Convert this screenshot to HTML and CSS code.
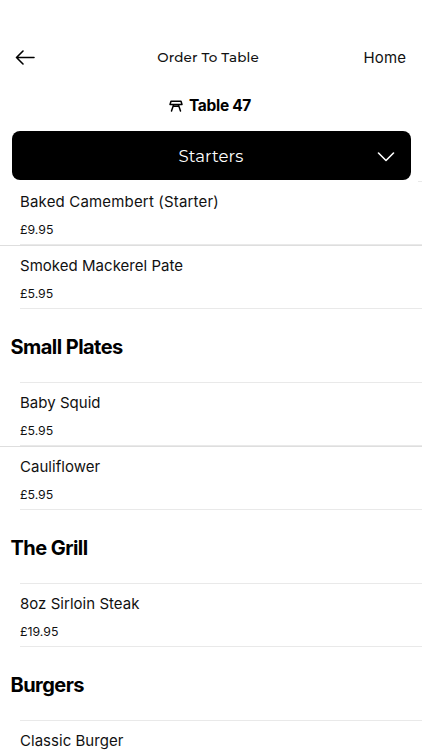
FILE: index.html
```
<!DOCTYPE html>
<html lang="en">
<head>
<meta charset="utf-8">
<title>Order To Table</title>
<link rel="stylesheet" href="styles.css">
</head>
<body>
<header class="nav">
<svg class="back" viewBox="0 0 20 16"><path d="M19 7.5H1.5M8 1L1.5 7.5L8 14"/></svg>
<h1 class="title">Order To Table</h1>
<a class="home">Home</a>
</header>
<div class="table-no">
<svg class="table-icon" viewBox="0 0 14 12"><path d="M2 1.2H12L13 4.5H1ZM4.6 4.7L2.5 11M9.4 4.7L11.5 11M4.5 6.3H9.5"/></svg>
<span class="table-label">Table 47</span>
</div>
<div class="picker"><span class="picker-label">Starters</span><svg class="chevron" viewBox="0 0 18 10"><path d="M1.5 1L9 8.5L16.5 1"/></svg></div>
<main>
<ul class="items first">
<li class="item"><span class="name wide">Baked Camembert (Starter)</span><span class="price">£9.95</span></li>
<li class="item"><span class="name">Smoked Mackerel Pate</span><span class="price">£5.95</span></li>
</ul>
<h2 class="section">Small Plates</h2>
<ul class="items">
<li class="item"><span class="name">Baby Squid</span><span class="price">£5.95</span></li>
<li class="item"><span class="name">Cauliflower</span><span class="price">£5.95</span></li>
</ul>
<h2 class="section">The Grill</h2>
<ul class="items">
<li class="item"><span class="name">8oz Sirloin Steak</span><span class="price">£19.95</span></li>
</ul>
<h2 class="section">Burgers</h2>
<ul class="items">
<li class="item"><span class="name">Classic Burger</span></li>
</ul>
</main>
</body>
</html>
```
FILE: styles.css
```
* { box-sizing: border-box; }
body { margin: 0; height: 750px; overflow: hidden; background: #fff; color: #111; font-family: Inter, sans-serif; }
h1, h2, ul { margin: 0; padding: 0; font-weight: inherit; }
ul { list-style: none; }
svg { fill: none; stroke: #000; stroke-width: 1.6; stroke-linecap: round; stroke-linejoin: round; }
.nav { height: 77px; padding: 38px 16px 0 15px; display: grid; grid-template-columns: 1fr auto 1fr; align-items: center; }
.back { width: 20px; height: 16px; }
.title { margin-right: 5px; padding-bottom: 1px; font-family: Montserrat, Inter, sans-serif; font-size: 13.5px; font-weight: 500; letter-spacing: .15px; }
.home { justify-self: end; font-size: 15px; letter-spacing: .1px; }
.table-no { height: 54px; padding: 2px 2px 0 0; display: flex; align-items: center; justify-content: center; gap: 6px; color: #000; font-size: 15.5px; font-weight: 700; letter-spacing: -.3px; }
.table-icon { width: 14px; height: 12px; margin-top: 2px; stroke-width: 1.5; }
.picker { height: 49px; margin: 0 11.5px 1px; padding: 0 16px; border-radius: 8px; background: #000; color: #fff; display: grid; grid-template-columns: 18px 1fr 18px; align-items: center; }
.picker-label { grid-column: 2; text-align: center; font-family: Montserrat, Inter, sans-serif; font-size: 16.5px; font-weight: 450; letter-spacing: .1px; }
.chevron { width: 18px; height: 10px; margin-top: 2px; stroke: #fff; }
.items { background: linear-gradient(#e9e9e9, #e9e9e9) 20px 0 no-repeat; background-size: 100% 1px; }
.items.first { background-position: 418px 0; }
.item { height: 64px; padding: 11px 20px 0; display: flex; flex-direction: column; background: linear-gradient(#e9e9e9, #e9e9e9) 20px 100% / 100% 1px no-repeat; }
.item + .item { background: linear-gradient(#dedede, #dedede) 0 0 / 100% 1px no-repeat, linear-gradient(#e9e9e9, #e9e9e9) 20px 100% / 100% 1px no-repeat; }
.name { font-size: 15px; line-height: 20px; letter-spacing: .03px; }
.name.wide { letter-spacing: .17px; }
.price { margin-top: 10px; font-size: 12.3px; line-height: 16px; }
.section { height: 73px; padding-left: 10.5px; color: #000; font-size: 20px; font-weight: 700; line-height: 77px; letter-spacing: -.55px; }
```
